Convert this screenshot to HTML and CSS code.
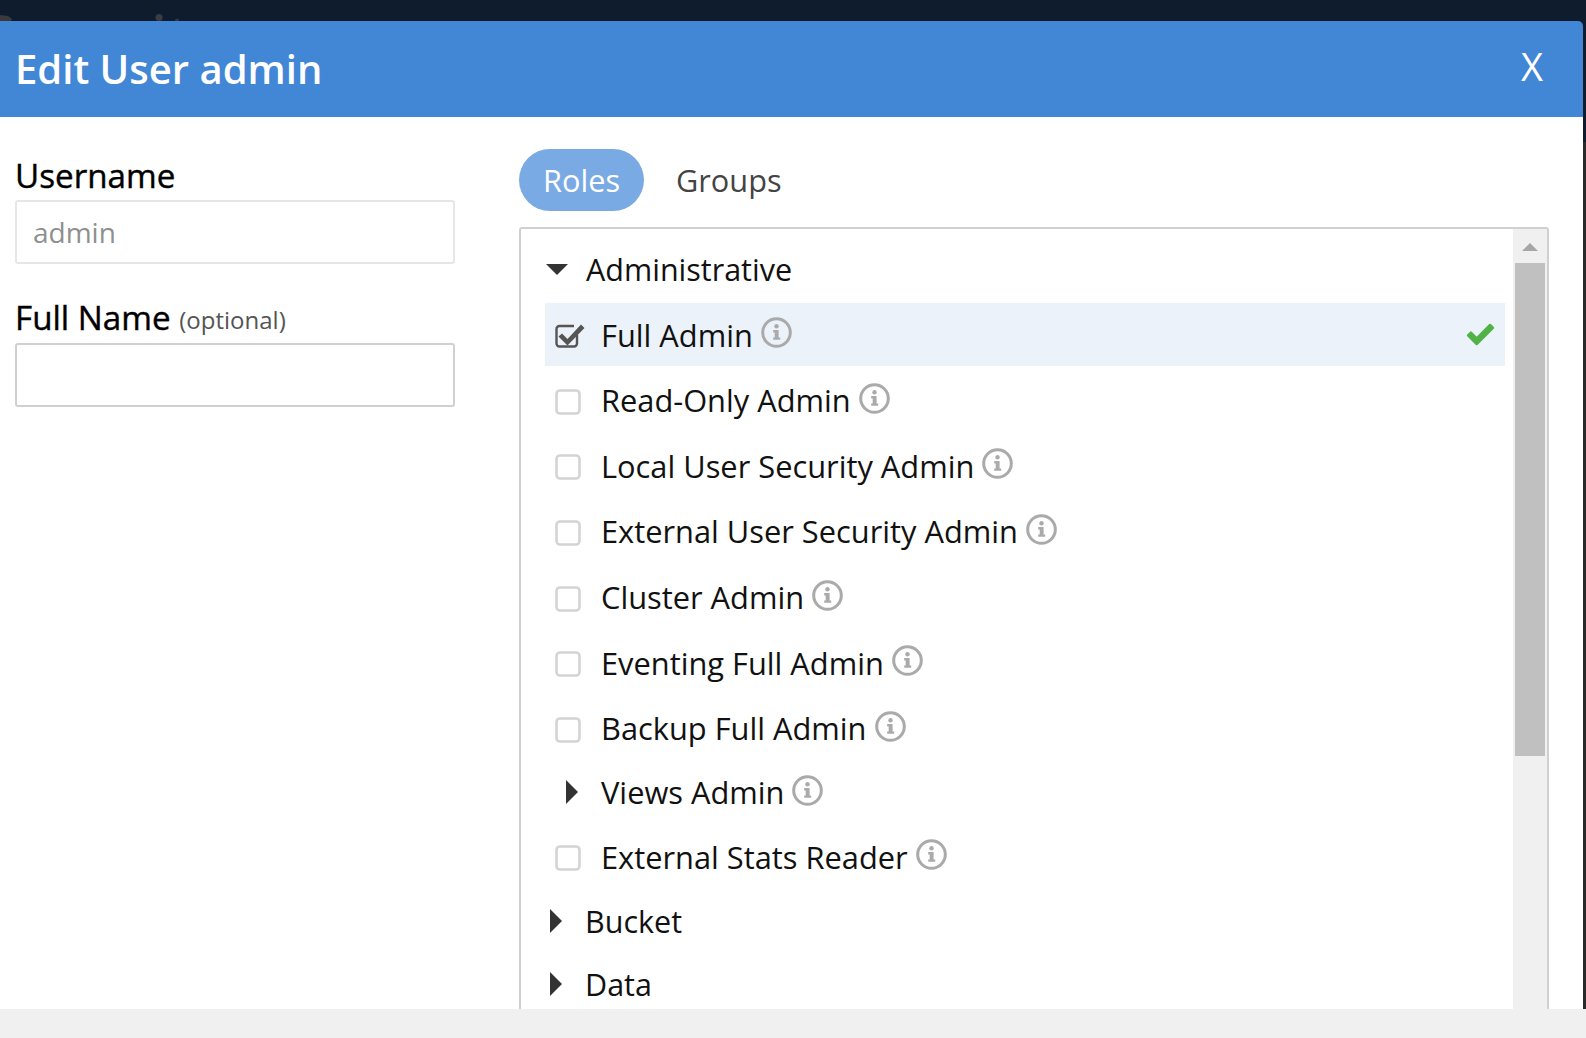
FILE: index.html
```html
<!DOCTYPE html>
<html lang="en">
<head>
  <meta charset="UTF-8">
  <title>Edit User admin</title>
  <link rel="stylesheet" href="styles.css">
</head>
<body>
  <svg class="defs" width="0" height="0">
    <symbol id="info" viewBox="0 0 31 31">
      <circle cx="15.5" cy="15.5" r="13.8" fill="none" stroke="#aaa" stroke-width="3"/>
      <circle cx="15.5" cy="9.3" r="2.2" fill="#aaa"/>
      <path d="M12.2 13h5.4v7.4h1.600v2.400h-7v-2.400h1.500v-5h-1.500z" fill="#aaa"/>
    </symbol>
    <symbol id="box" viewBox="0 0 26 26">
      <rect x="1.500" y="1.500" width="23" height="23" rx="3.500" fill="#fff" stroke="#d4d4d4" stroke-width="2.600"/>
    </symbol>
    <symbol id="boxed" viewBox="0 0 31 26">
      <path d="M22 12v8.500a3 3 0 0 1-3 3H4.500a3 3 0 0 1-3-3V6a3 3 0 0 1 3-3H19" fill="none" stroke="#555" stroke-width="2.400"/>
      <path d="M6.500 12.500l5.500 5.500L25.500 3.500l3.500 3.500L12 24.500l-9-9z" transform="translate(.5 -2)" fill="#555"/>
    </symbol>
  </svg>

  <div class="topbar">
    <svg class="specks" width="200" height="21" viewBox="0 0 200 21">
      <path d="M0 15l8 1 4 3-1 2H0z" fill="#3a3a3c"/>
      <circle cx="159" cy="17.500" r="3.500" fill="#3b3c40"/>
      <circle cx="177" cy="20.500" r="2" fill="#34363c"/>
    </svg>
  </div>
  <div class="modal">
    <div class="modal-header">
      <h1>Edit User admin</h1>
      <a class="close">X</a>
    </div>
    <div class="modal-body">
      <div class="left-col">
        <label>Username</label>
        <input class="locked" type="text" placeholder="admin">
        <label class="second">Full Name <small>(optional)</small></label>
        <input type="text">
      </div>
      <div class="right-col">
        <div class="tabs">
          <span class="tab active">Roles</span>
          <span class="tab">Groups</span>
        </div>
        <div class="panel">
          <div class="tree">
            <div class="group open"><i class="tri down"></i>Administrative</div>

            <div class="role selected">
              <svg class="check"><use href="#boxed"/></svg>
              <span>Full Admin</span>
              <svg class="info"><use href="#info"/></svg>
              <svg class="ok" viewBox="0 0 30 24"><path d="M2 13l3-3 6 6L25 2l3 3-17 17z" fill="#52b248" stroke="#52b248" stroke-width="2.500" stroke-linejoin="round"/></svg>
            </div>
            <div class="role">
              <svg class="check"><use href="#box"/></svg>
              <span>Read-Only Admin</span>
              <svg class="info"><use href="#info"/></svg>
            </div>
            <div class="role">
              <svg class="check"><use href="#box"/></svg>
              <span>Local User Security Admin</span>
              <svg class="info"><use href="#info"/></svg>
            </div>
            <div class="role">
              <svg class="check"><use href="#box"/></svg>
              <span>External User Security Admin</span>
              <svg class="info"><use href="#info"/></svg>
            </div>
            <div class="role">
              <svg class="check"><use href="#box"/></svg>
              <span>Cluster Admin</span>
              <svg class="info"><use href="#info"/></svg>
            </div>
            <div class="role">
              <svg class="check"><use href="#box"/></svg>
              <span>Eventing Full Admin</span>
              <svg class="info"><use href="#info"/></svg>
            </div>
            <div class="role">
              <svg class="check"><use href="#box"/></svg>
              <span>Backup Full Admin</span>
              <svg class="info"><use href="#info"/></svg>
            </div>
            <div class="role sub">
              <i class="tri right"></i>
              <span>Views Admin</span>
              <svg class="info"><use href="#info"/></svg>
            </div>
            <div class="role tail">
              <svg class="check"><use href="#box"/></svg>
              <span>External Stats Reader</span>
              <svg class="info"><use href="#info"/></svg>
            </div>

            <div class="group"><i class="tri right"></i>Bucket</div>
            <div class="group"><i class="tri right"></i>Data</div>
          </div>
          <div class="scrollbar">
            <i class="arrow"></i>
            <div class="thumb"></div>
          </div>
        </div>
      </div>
    </div>
  </div>
</body>
</html>
```

FILE: styles.css
```css
* {
  box-sizing: border-box;
}

html, body {
  margin: 0;
  height: 100%;
  overflow: hidden;
}

body {
  font-family: 'Open Sans', sans-serif;
  color: #111;
  background: #f0f0f0;
}

.defs {
  display: block;
  height: 0;
}

.topbar {
  height: 21px;
  background: #0f1c2e;
}

.specks {
  display: block;
}

.modal {
  height: 988px;
  background: #0f1c2e;
  border-right: 3px solid;
  border-image: linear-gradient(#0f1c2e 122px, #2a2a2a 122px) 1;
  overflow: hidden;
}

.modal-header {
  height: 96px;
  background: #4286d6;
  color: #fff;
  display: flex;
  align-items: center;
  justify-content: space-between;
  padding: 0 40px 0 15px;
  border-top-right-radius: 5px;
}

.modal-header h1 {
  margin: 0 0 2px;
  font-size: 40px;
  font-weight: 600;
}

.close {
  font-size: 38px;
  margin-bottom: 6px;
}

.modal-body {
  display: flex;
  height: 892px;
  padding-top: 32px;
  background: #fff;
}

.left-col {
  width: 519px;
  padding: 4px 64px 0 15px;
}

label {
  display: block;
  font-size: 33.200px;
  line-height: 45px;
  margin-bottom: 2px;
  color: #000;
  -webkit-text-stroke: .4px #000;
}

label.second {
  margin-top: 31px;
  margin-bottom: 0;
}

label small {
  position: relative;
  top: -1px;
  font-size: 24px;
  font-weight: 400;
  color: #555;
  -webkit-text-stroke: 0;
}

input {
  display: block;
  width: 100%;
  height: 64px;
  padding: 0 16px;
  font: 28px 'Open Sans', sans-serif;
  border: 2px solid #d0d0d0;
  border-radius: 3px;
  background: #fff;
}

input.locked {
  border-color: #e6e6e6;
}

input::placeholder {
  color: #8f8f8f;
  opacity: 1;
}

.right-col {
  width: 1030px;
}

.tabs {
  display: flex;
  gap: 8px;
  height: 62px;
  margin-bottom: 16px;
  font-size: 30.700px;
}

.tab {
  padding: 0 24px;
  line-height: 62px;
  color: #444;
  border-radius: 31px;
}

.tab.active {
  background: #7aaae3;
  color: #fff;
}

.panel {
  display: flex;
  height: 799px;
  border: 2px solid #d0d0d0;
  border-radius: 3px 3px 0 0;
}

.tree {
  flex: 1;
  padding: 7px 8px 0 24px;
  font-size: 30.800px;
}

.group {
  display: flex;
  align-items: center;
  height: 63px;
  font-size: 30.500px;
  color: #111;
}

.group.open {
  height: 66px;
  margin-bottom: 1px;
}

.tri {
  display: block;
  flex: none;
}

.tri.down {
  width: 0;
  height: 0;
  margin: 0 18px 0 1px;
  border-left: 11px solid transparent;
  border-right: 11px solid transparent;
  border-top: 11px solid #333;
}

.tri.right {
  width: 0;
  height: 0;
  margin: 0 23px 0 5px;
  border-top: 12px solid transparent;
  border-bottom: 12px solid transparent;
  border-left: 12px solid #333;
}

.role {
  display: flex;
  align-items: center;
  height: 63px;
  margin-bottom: 2.650px;
  padding-left: 10px;
  position: relative;
}

.role.tail {
  margin-bottom: 1px;
}

.role span {
  color: #111;
}

.role .check {
  flex: none;
  width: 26px;
  height: 26px;
  margin: 3px 20px 0 0;
}

.role.selected {
  background: #ecf2fa;
}

.role.selected .check {
  width: 31px;
  margin: 2px 15px 0 0;
}

.role.sub {
  height: 60px;
  padding-left: 14px;
}

.role.sub .tri {
  margin: 0 23px 0 7px;
}

.info {
  flex: none;
  width: 31px;
  height: 31px;
  margin: 0 0 4px 8px;
}

.ok {
  position: absolute;
  right: 10px;
  top: 20px;
  width: 29px;
  height: 23px;
}

.scrollbar {
  flex: none;
  width: 34px;
  background: #f0f0f0;
  padding: 0 2px;
}

.arrow {
  display: block;
  width: 0;
  height: 0;
  margin: 14px auto 12px;
  border-left: 8px solid transparent;
  border-right: 8px solid transparent;
  border-bottom: 8px solid #a6a6a6;
}

.thumb {
  height: 493px;
  background: #c0c0c0;
}
```
